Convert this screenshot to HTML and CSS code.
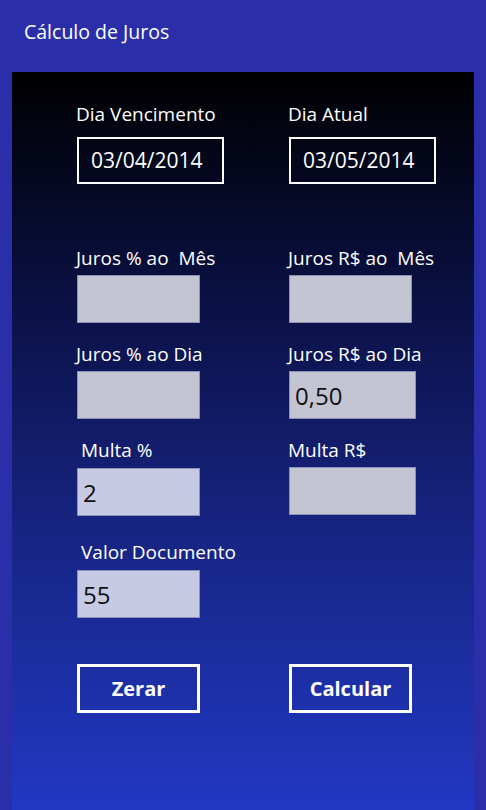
FILE: index.html
```html
<!DOCTYPE html>
<html lang="pt">
<head>
  <meta charset="UTF-8">
  <title>Cálculo de Juros</title>
  <link rel="stylesheet" href="styles.css">
</head>
<body>
  <h1 class="titulo">Cálculo de Juros</h1>

  <div class="painel">
    <div class="linha linha-datas">
      <div class="campo">
        <label>Dia Vencimento</label>
        <div class="data">03/04/2014</div>
      </div>
      <div class="campo">
        <label>Dia Atual</label>
        <div class="data">03/05/2014</div>
      </div>
    </div>

    <div class="linha linha-mes">
      <div class="campo">
        <label>Juros % ao&nbsp; Mês</label>
        <div class="caixa"></div>
      </div>
      <div class="campo">
        <label>Juros R$ ao&nbsp; Mês</label>
        <div class="caixa"></div>
      </div>
    </div>

    <div class="linha linha-dia">
      <div class="campo">
        <label>Juros % ao Dia</label>
        <div class="caixa"></div>
      </div>
      <div class="campo">
        <label>Juros R$ ao Dia</label>
        <div class="caixa larga">0,50</div>
      </div>
    </div>

    <div class="linha linha-multa">
      <div class="campo">
        <label class="recuo">Multa %</label>
        <div class="caixa azulada">2</div>
      </div>
      <div class="campo">
        <label>Multa R$</label>
        <div class="caixa larga"></div>
      </div>
    </div>

    <div class="linha linha-valor">
      <div class="campo">
        <label class="recuo">Valor Documento</label>
        <div class="caixa azulada">55</div>
      </div>
    </div>

    <div class="linha linha-botoes">
      <button class="botao">Zerar</button>
      <button class="botao">Calcular</button>
    </div>
  </div>
</body>
</html>
```

FILE: styles.css
```css
html, body {
  height: 100%;
}
body {
  margin: 0;
  background-color: #2a2fa9;
  font-family: "Open Sans", "Noto Sans", sans-serif;
  color: white;
  display: flex;
  flex-direction: column;
  overflow: hidden;
}
.titulo {
  font-weight: normal;
  font-size: 19.5px;
  margin: 0;
  padding: 18px 0 0 24px;
  height: 72px;
  flex-shrink: 0;
  box-sizing: border-box;
  line-height: 28px;
}
.painel {
  flex: 1;
  margin: 0 12px;
  padding: 30px 0 0 65px;
  background: linear-gradient(#000000 0%, #0a1042 30%, #16237e 60%, #2238c4 100%);
}
.linha {
  display: grid;
  grid-template-columns: 212px 1fr;
}
.campo {
  display: flex;
  flex-direction: column;
}
label {
  font-size: 19px;
  line-height: 24px;
  height: 24px;
  margin-left: -1px;
}
label.recuo {
  margin-left: 4px;
}
.data {
  width: 147px;
  height: 47px;
  box-sizing: border-box;
  border: 2.5px solid white;
  margin-top: 11px;
  padding-left: 12px;
  font-size: 21px;
  line-height: 42px;
}
.caixa {
  width: 123px;
  height: 48px;
  box-sizing: border-box;
  background-color: #c4c5d3;
  border: 1px solid #8c90b4;
  margin-top: 5px;
  padding-left: 5px;
  color: #111;
  font-size: 24px;
  line-height: 48px;
}
.caixa.larga {
  width: 127px;
}
.caixa.azulada {
  background-color: #c6cae3;
  margin-top: 6px;
}
.linha-mes {
  margin-top: 62px;
}
.linha-dia {
  margin-top: 19px;
}
.linha-multa {
  margin-top: 19px;
}
.linha-valor {
  margin-top: 24px;
}
.linha-botoes {
  margin-top: 46px;
}
.botao {
  width: 123px;
  height: 49px;
  box-sizing: border-box;
  background: transparent;
  border: 3px solid white;
  color: white;
  font-family: "Open Sans", "Noto Sans", sans-serif;
  font-weight: bold;
  font-size: 20px;
  padding: 0;
  cursor: pointer;
}
```
